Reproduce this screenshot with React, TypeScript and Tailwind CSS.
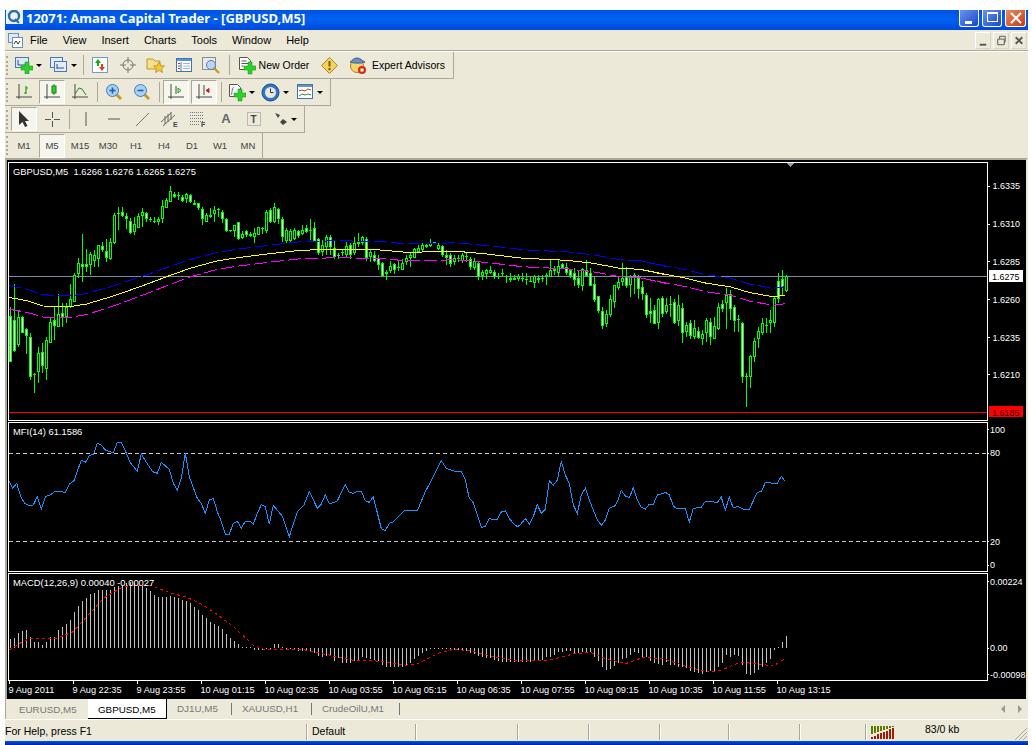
import React from "react";

// candles read off the chart: high, body top, body bottom, low, white body
type C = [number, number, number, number, number];

const SET_A: C[] = [
  [440,468,605,605,1],[372,480,572,575,1],[450,470,555,560,0],[468,472,520,520,1],[505,508,527,582,1],[520,532,650,660,1],[640,642,644,698,0],[562,578,636,668,0],[550,577,617,640,1],[530,541,627,660,0],
  [470,487,550,550,0],[440,480,497,540,1],[402,462,500,500,0],[430,460,472,500,1],[430,442,470,488,0],[372,418,440,445,0],[340,345,425,425,0],[295,310,342,355,0],[222,312,320,365,1],[268,312,320,335,1],
  [275,282,315,345,0],[270,286,302,320,0],[255,256,296,322,0],[245,258,270,275,1],[238,274,295,305,1],[235,246,298,300,0],[160,165,250,252,0],[142,160,162,210,0],[140,156,168,170,1],[160,168,178,208,1],
  [173,182,220,222,1],[170,192,216,225,0],[160,168,203,203,0],[145,156,168,200,0],[155,160,176,185,1],[172,176,178,185,0],[170,184,187,190,0],[170,178,186,195,0],[120,138,177,190,0],[115,120,144,144,0],
  [78,94,125,125,0],[95,103,112,115,1],[96,104,106,120,0],[105,112,122,125,1],[100,103,118,130,0],[103,105,125,130,1],[120,128,134,135,1],[128,130,144,150,1],[140,148,176,195,1],[160,165,185,187,0],
  [145,165,170,175,1],[138,150,162,185,0],[145,148,150,170,0],[150,156,178,188,1],[175,178,214,215,1],[210,211,214,215,1],[195,195,212,230,0],[185,187,238,240,1],[212,222,233,238,0],[210,214,224,232,1],
  [215,222,229,232,1],[205,220,231,248,0],[200,202,224,225,0],[200,203,205,222,0],[150,156,213,218,0],[145,150,187,190,1],[130,142,186,190,0],[145,148,177,192,1],[170,178,232,245,1],[205,211,242,250,0],
  [208,212,242,245,0],[205,211,238,240,0],[210,213,227,235,1],[195,210,221,225,0],[195,204,216,220,1],[178,209,211,240,0],[185,205,242,243,1],[235,238,278,285,1],[240,255,276,288,0],[225,230,260,285,0],
  [225,232,262,285,1],[240,265,292,296,1],[280,285,287,296,0],
];

const SET_B: C[] = [
  [210,216,219,228,0],[185,198,225,230,0],[190,196,226,238,1],[170,190,220,225,0],[160,186,192,200,1],[168,172,190,195,0],[172,178,233,243,1],[210,217,230,245,0],[213,226,243,245,1],[225,235,255,270,1],
  [245,250,288,290,1],[270,277,282,300,1],[243,259,273,280,0],[248,253,270,283,1],[240,262,264,272,0],[238,249,270,270,0],[225,235,247,255,0],[215,226,235,262,0],[205,208,234,235,0],[195,205,216,220,0],
  [190,195,211,216,0],[190,195,202,205,1],[178,190,197,200,0],[186,187,192,193,1],[190,196,207,210,0],[195,198,225,230,1],[210,226,235,255,1],[218,226,252,262,1],[225,235,247,255,0],[225,235,237,245,0],
  [218,226,243,248,0],[218,228,230,245,0],[230,236,262,270,1],[235,243,264,270,0],[243,250,291,300,1],[270,277,289,300,0],[268,270,283,297,0],[258,270,278,282,0],[270,277,291,297,1],[280,287,290,297,0],
  [267,280,281,292,0],[285,287,289,309,0],[279,294,299,305,1],[285,293,300,300,1],[283,288,298,302,0],[280,295,297,305,0],[280,297,299,316,0],[288,303,305,306,0],[285,288,309,323,0],[285,294,299,310,1],
  [285,295,296,305,0],[280,286,288,315,0],[240,270,290,290,0],[258,267,272,285,1],[240,258,279,290,0],[250,252,263,263,1],[248,260,278,285,1],[270,271,288,295,1],[265,280,300,318,1],[270,295,315,325,1],
  [265,268,318,333,0],[240,270,288,290,1],[265,280,317,318,1],[290,313,359,365,1],[348,349,392,400,1],[380,394,437,446,1],[390,401,431,440,0],[345,358,404,410,0],[315,316,365,383,0],[290,306,324,330,0],
  [250,294,305,318,0],[260,290,317,323,1],[285,288,315,350,0],[280,286,288,342,0],[285,295,326,358,1],[303,322,342,360,1],[340,346,404,413,1],[355,394,401,430,1],[375,391,431,431,1],[355,358,430,446,0],
  [348,354,401,410,1],[355,375,395,403,0],[348,373,375,412,0],[358,367,428,431,1],[345,376,423,437,0],
];

const SET_C: C[] = [
  [190,203,278,310,1],[245,255,275,290,0],[240,250,288,296,1],[240,265,290,298,0],[260,274,295,298,1],[270,283,296,315,0],[235,240,278,305,0],[235,247,292,315,1],[232,258,296,296,0],[190,202,267,270,0],
  [180,193,207,215,1],[145,166,188,268,0],[150,163,206,240,1],[195,202,242,275,1],[225,237,239,277,0],[247,248,412,430,1],[400,408,410,500,0],[345,347,410,445,0],[295,304,350,365,0],[260,274,296,325,0],
  [235,250,278,285,0],[235,254,256,280,0],[210,240,250,278,0],[170,175,248,260,0],[100,124,178,188,1],[90,118,142,165,1],[105,108,152,155,0],
];

const toY = (offset: number) => (c: C): C => [offset + c[0] / 3, offset + c[1] / 3, offset + c[2] / 3, offset + c[3] / 3, c[4]];
const CANDLES: C[] = [...SET_A.map(toY(160)), ...SET_B.map(toY(180)), ...SET_C.map(toY(240))];

const YELLOW: number[][] = [
  ...[[26,412],[80,422],[130,438],[210,440],[260,432],[340,408],[420,380],[500,350],[570,325],[650,303],[700,295],[800,282],[900,271],[1000,268]].map(([x, y]) => [x / 3, 160 + y / 3]),
  ...[[0,208],[120,210],[200,217],[350,214],[440,222],[550,235],[680,241],[760,250],[840,265],[900,268],[980,285]].map(([x, y]) => [340 + x / 3, 180 + y / 3]),
  ...[[0,88],[60,100],[130,113],[200,130],[270,140],[330,158],[400,170],[434,166]].map(([x, y]) => [640 + x / 3, 240 + y / 3]),
];

const envelope = (sign: number) =>
  YELLOW.map(([x, y]) => [x, y + sign * (x < 200 ? 12 - (x / 200) * 3.5 : 8.5)]);

const MFI: number[][] = [
  ...[[26,180],[38,205],[50,190],[62,230],[74,250],[90,258],[100,255],[112,230],[124,268],[136,230],[150,225],[166,214],[180,214],[196,218],[208,192],[222,182],[244,120],[258,127],[268,106],[280,104],[292,70],[304,75],[316,90],[340,98],[352,67],[364,68],[376,92],[390,127],[412,154],[424,102],[436,122],[458,155],[472,160],[484,127],[508,148],[520,190],[532,210],[544,175],[556,100],[568,170],[592,235],[604,250],[616,280],[628,240],[640,235],[652,275],[662,300],[676,342],[688,343],[700,310],[712,304],[724,325],[736,304],[750,304],[760,312],[772,280],[784,254],[796,260],[808,313],[820,256],[848,290],[868,350],[892,275],[912,255],[928,214],[952,265],[964,252],[976,224],[988,252],[1012,243],[1036,193],[1048,217],[1060,220],[1072,214],[1084,214],[1096,242],[1108,247],[1120,230],[1144,326],[1156,332],[1168,310],[1180,306],[1212,273],[1252,272],[1276,215],[1300,170],[1324,122],[1340,146],[1370,156],[1384,154],[1396,180],[1408,235],[1420,248],[1444,322],[1456,320],[1468,295],[1480,300],[1492,298],[1504,276],[1516,273],[1528,296],[1540,310],[1552,320]].map(([x, y]) => [x / 3, 420 + y / 3]),
  ...[[0,315],[16,296],[28,312],[40,290],[52,254],[64,280],[76,268],[88,182],[100,196],[112,180],[124,124],[136,165],[148,190],[160,255],[172,280],[184,225],[196,205],[208,240],[232,300],[244,316],[256,300],[268,265],[284,258],[292,245],[304,211],[316,228],[328,233],[340,203],[352,240],[364,262],[376,267],[388,253],[400,253],[412,225],[424,222],[436,217],[448,224],[460,258],[472,267],[496,266],[508,306],[520,265],[544,262],[556,244],[592,247],[604,232],[616,270],[628,232],[640,264],[652,259],[676,270],[688,268],[712,217],[724,215],[736,188],[772,190],[784,169],[794,182]].map(([x, y]) => [520 + x / 3, 420 + y / 3]),
];

// macd bars, in px above (+) or below (-) the zero line
const MACD_A = [210,207,193,185,183,205,218,218,228,218,205,203,183,173,165,152,130,110,97,87,75,72,64,62,64,62,55,50,47,42,40,43,47,52,57,67,78,84,84,84,81,84,88,94,97,103,113,123,137,148,160,165,170,181,195,208,215,225,234,235,235,243,243,243,238,238,225,225,234,236,238,243,247,246,245,245,252,260,263,262,260,275,268].map((t) => (237 - t) / 3);
const MACD_B = [68,68,68,62,60,52,55,58,60,64,75,80,82,82,82,80,75,68,58,48,38,33,28,27,27,24,24,33,30,30,30,33,38,42,48,52,55,55,60,63,65,65,65,67,67,67,67,67].map((b) => (24 - b) / 3);
const MACD_C = [722,722,720,712,710,705,697,695,693,693,698,698,697,697,695,710,722,742,749,747,738,730,718,713,705,697,700,710,712,722,730,732,735,727,735,735,740,742,745,752,755,760,762,755,752,752,740,728,705,710,705,708,735,762,765,760,750,740,730,718,690,680,666,648].map((b) => (684 - b) / 3);
const MACD = [...MACD_A, ...MACD_B, ...MACD_C];

const SIGNAL: number[][] = [
  ...[[28,240],[60,220],[90,205],[170,205],[220,185],[260,140],[310,85],[360,55],[400,45],[450,45],[500,65],[560,82],[600,100],[640,125],[700,170],[760,225],[790,237],[900,237],[1000,258]].map(([x, y]) => [x / 3, 570 + y / 3]),
  ...[[10,55],[50,63],[100,62],[130,65],[160,70],[190,76],[230,73],[260,58],[300,38],[340,28],[390,32],[430,42],[480,55]].map(([x, y]) => [340 + x / 3, 640 + y / 3]),
  ...[[0,722],[60,723],[100,718],[160,702],[210,697],[260,718],[320,730],[370,712],[430,716],[500,740],[560,755],[600,752],[660,727],[700,730],[760,738],[794,716]].map(([x, y]) => [520 + x / 3, 420 + y / 3]),
];

const pts = (list: number[][]) => list.map(([x, y]) => `${x.toFixed(1)},${y.toFixed(1)}`).join(" ");

const DATES = ["9 Aug 2011","9 Aug 22:35","9 Aug 23:55","10 Aug 01:15","10 Aug 02:35","10 Aug 03:55","10 Aug 05:15","10 Aug 06:35","10 Aug 07:55","10 Aug 09:15","10 Aug 10:35","10 Aug 11:55","10 Aug 13:15"];

function Caret() {
  return <span className="ml-[3px] h-0 w-0 border-x-[3px] border-t-[3px] border-x-transparent border-t-black" />;
}

function Plus() {
  return <path d="M10 6h4v4h4v4h-4v4h-4v-4H6v-4h4z" fill="#2ed02e" stroke="#0f8f0f" strokeWidth="0.5" />;
}

function Glass({ minus }: { minus?: boolean }) {
  return (
    <svg width="18" height="18" viewBox="0 0 18 18">
      <path d="M10 10l6 6" stroke="#c79a2b" strokeWidth="3" />
      <circle cx="7.5" cy="7.5" r="6" fill="#a9d0f0" stroke="#3a7fc0" />
      <path d={minus ? "M4.5 7.5h6" : "M4.5 7.5h6M7.5 4.5v6"} stroke="#1d5fa8" strokeWidth="1.6" />
    </svg>
  );
}

function Axes({ children }: { children: React.ReactNode }) {
  return (
    <svg width="18" height="18" viewBox="0 0 18 18" fill="none">
      <path d="M4 1v15M1 14h16" stroke="#4a4a3a" />
      {children}
    </svg>
  );
}

const ICONS: Record<string, React.ReactNode> = {
  newChart: (
    <svg width="18" height="18" viewBox="0 0 18 18">
      <rect x="0.5" y="1.5" width="13" height="10" fill="#dbe8f8" stroke="#4a78b8" />
      <path d="M3 4v5M3 9h7" stroke="#30507a" />
      <Plus />
    </svg>
  ),
  profiles: (
    <svg width="18" height="18" viewBox="0 0 18 18" fill="#e3edf9" stroke="#4a78b8">
      <rect x="0.5" y="1.5" width="12" height="10" />
      <rect x="4.5" y="5.5" width="12" height="10" />
      <path d="M7 8v5M7 12h7" stroke="#30507a" />
    </svg>
  ),
  market: (
    <svg width="17" height="17" viewBox="0 0 17 17">
      <rect x="0.5" y="0.5" width="15" height="15" fill="#fff" stroke="#6f9ccc" />
      <path d="M6 2L3 6h2v3h2V6h2z" fill="#18a818" />
      <path d="M10 14l3-4h-2V7H9v3H7z" fill="#e04020" />
    </svg>
  ),
  navigator: (
    <svg width="18" height="18" viewBox="0 0 18 18" fill="none" stroke="#777">
      <circle cx="9" cy="9" r="5" />
      <path d="M9 1v6M9 11v6M1 9h6M11 9h6" />
    </svg>
  ),
  favorites: (
    <svg width="20" height="18" viewBox="0 0 20 18">
      <path d="M1 3h6l2 2h5v8H1z" fill="#f6e08a" stroke="#b89a3a" />
      <path d="M13 6l1.7 3.6 3.8.4-2.8 2.6.8 3.9-3.5-2-3.5 2 .8-3.9L7.5 10l3.8-.4z" fill="#f5c92c" stroke="#a8841c" strokeWidth="0.7" />
    </svg>
  ),
  terminal: (
    <svg width="17" height="16" viewBox="0 0 17 16">
      <rect x="0.5" y="1.5" width="15" height="13" fill="#fff" stroke="#3f74b8" />
      <path d="M1 2h14v2H1z" fill="#5f93d0" />
      <path d="M5 5v9" stroke="#3f74b8" />
      <path d="M2 6.5h2M2 9h2M2 11.5h2" stroke="#c03030" />
      <path d="M7 6.5h7M7 9h7M7 11.5h7" stroke="#9bb7d8" />
    </svg>
  ),
  tester: (
    <svg width="20" height="19" viewBox="0 0 20 19">
      <rect x="0.5" y="1.5" width="13" height="12" fill="#e8e8ea" stroke="#8a8a96" />
      <path d="M11 11l6 6" stroke="#c79a2b" strokeWidth="2.4" />
      <circle cx="9" cy="9" r="4.5" fill="#bcd6f0" stroke="#5f7fa8" />
    </svg>
  ),
  order: (
    <svg width="18" height="19" viewBox="0 0 18 19">
      <path d="M1.5 1.5h8l3 3v9h-11z" fill="#fff" stroke="#555" />
      <path d="M3.5 5h5M3.5 7.5h7M3.5 10h2" stroke="#555" />
      <Plus />
    </svg>
  ),
  auto: (
    <svg width="17" height="17" viewBox="0 0 17 17">
      <path d="M8.5 0.5l8 8-8 8-8-8z" fill="#f5d25a" stroke="#a8842a" />
      <path d="M8.5 4v5.5" stroke="#7a5a16" strokeWidth="2" />
      <circle cx="8.5" cy="12" r="1.2" fill="#7a5a16" />
    </svg>
  ),
  expert: (
    <svg width="19" height="19" viewBox="0 0 19 19">
      <circle cx="8" cy="10" r="6.5" fill="#f4d56a" stroke="#a8842a" />
      <path d="M1 6c2-1 3-4 7-4s5 3 8 4c-3 1.5-12 1.5-15 0z" fill="#6d8fc0" stroke="#3d5f90" />
      <circle cx="13" cy="14" r="4" fill="#d42a12" />
      <rect x="11.5" y="12.5" width="3" height="3" fill="#fff" />
    </svg>
  ),
  bars: (
    <Axes>
      <path d="M11 3v8M9 10h2M11 5h2" stroke="#15a015" strokeWidth="1.2" />
    </Axes>
  ),
  candles: (
    <Axes>
      <path d="M11 1v11" stroke="#128012" />
      <rect x="9" y="3" width="4" height="7" fill="#2ed12e" stroke="#128012" />
    </Axes>
  ),
  line: (
    <Axes>
      <path d="M4 11l4-6 3 1 4 6" stroke="#1f8a1f" />
    </Axes>
  ),
  autoscroll: (
    <Axes>
      <path d="M9 3v8" stroke="#4a4a3a" />
      <path d="M11 5l3 2.5-3 2.5z" fill="#c8f0c8" stroke="#20a020" />
    </Axes>
  ),
  shift: (
    <Axes>
      <path d="M9 2v10" stroke="#4a4a3a" />
      <path d="M14 5.5l-3 2 3 2z" fill="#d02020" stroke="#d02020" />
    </Axes>
  ),
  indicators: (
    <svg width="18" height="19" viewBox="0 0 18 19">
      <path d="M1.5 1.5h8l3 3v9h-11z" fill="#fff" stroke="#555" />
      <text x="3" y="10" fontSize="8" fontStyle="italic" fill="#333" fontFamily="Liberation Serif, serif">f</text>
      <Plus />
    </svg>
  ),
  clock: (
    <svg width="19" height="19" viewBox="0 0 19 19">
      <circle cx="9.5" cy="9.5" r="8.5" fill="#2f76c8" stroke="#174a8c" />
      <circle cx="9.5" cy="9.5" r="5.5" fill="#e8e8e0" />
      <path d="M9.5 5.5v4h3" stroke="#333" fill="none" />
    </svg>
  ),
  templates: (
    <svg width="17" height="16" viewBox="0 0 17 16">
      <rect x="0.5" y="0.5" width="15" height="14" fill="#fff" stroke="#3f74b8" />
      <path d="M1 1h14v2H1z" fill="#5f93d0" />
      <path d="M2 7l3-1 3 1 3-2 3 1" stroke="#c04030" fill="none" />
      <path d="M2 12l3-2 3 1 3-1 3 1" stroke="#309030" fill="none" />
    </svg>
  ),
  cursor: (
    <svg width="14" height="18" viewBox="0 0 14 18">
      <path d="M2 1v14l3.5-3 2.5 5 2.5-1-2.5-5H12z" fill="#333" />
    </svg>
  ),
  cross: (
    <svg width="17" height="17" viewBox="0 0 17 17" stroke="#555">
      <path d="M8.5 1v6M8.5 10v6M1 8.5h6M10 8.5h6" />
    </svg>
  ),
  vline: (
    <svg width="4" height="16" viewBox="0 0 4 16" stroke="#555">
      <path d="M2 1v14" />
    </svg>
  ),
  hline: (
    <svg width="14" height="4" viewBox="0 0 14 4" stroke="#555">
      <path d="M1 2h12" />
    </svg>
  ),
  trend: (
    <svg width="15" height="15" viewBox="0 0 15 15" stroke="#777">
      <path d="M1 14L14 1" />
    </svg>
  ),
  channel: (
    <svg width="20" height="18" viewBox="0 0 20 18" fill="none" stroke="#666">
      <path d="M1 12l10-9M3 16l12-11M5 6v8M8 4v8M11 2v8" />
      <text x="13" y="17" fontSize="7" fontWeight="700" fill="#444" stroke="none" fontFamily="Liberation Sans, sans-serif">E</text>
    </svg>
  ),
  fibo: (
    <svg width="18" height="18" viewBox="0 0 18 18" fill="none" stroke="#777" strokeDasharray="1 1">
      <path d="M1 2.5h13M1 5.5h13M1 8.5h13M1 11.5h13M1 14.5h9" />
      <text x="12" y="17" fontSize="7" fontWeight="700" fill="#444" stroke="none" strokeDasharray="none" fontFamily="Liberation Sans, sans-serif">F</text>
    </svg>
  ),
  label: (
    <svg width="14" height="14" viewBox="0 0 14 14" fill="none" stroke="#888" strokeDasharray="1 1">
      <rect x="0.5" y="0.5" width="13" height="13" />
      <text x="3.5" y="11" fontSize="10" fontWeight="700" fill="#444" stroke="none" strokeDasharray="none" fontFamily="Liberation Sans, sans-serif">T</text>
    </svg>
  ),
  arrows: (
    <svg width="14" height="14" viewBox="0 0 14 14" fill="#444">
      <path d="M1 1l5 2-2 3zM9 7l4 3-4 3-3-3z" />
    </svg>
  ),
};

function Btn({ icon, pressed, w = "w-[28px]", drop, children }: { icon?: string; pressed?: boolean; w?: string; drop?: boolean; children?: React.ReactNode }) {
  return (
    <div className={`flex h-[25px] shrink-0 items-center justify-center ${w}`}>
      <div
        className={`flex h-[24px] w-full items-center justify-center ${pressed ? "mx-[1px] border border-b-white border-l-[#aca899] border-r-white border-t-[#aca899] bg-[#f6f5ee]" : ""}`}
      >
        {icon && ICONS[icon]}
        {drop && <Caret />}
        {children}
      </div>
    </div>
  );
}

function Sep() {
  return <div className="mx-[2.5px] h-[20px] w-[1px] shrink-0 bg-[#aca899]" />;
}

function Row({ w, last, children }: { w: string; last?: boolean; children: React.ReactNode }) {
  return (
    <div className={`flex items-center border-r border-[#aca899] ${last ? "h-[25px]" : "h-[27px] border-b"} ${w}`}>
      <div className="mr-[2px] ml-[1px] h-[19px] border-l-2 border-dotted border-[#aca899]" />
      {children}
    </div>
  );
}

function PriceChart() {
  return (
    <svg width="978" height="257" viewBox="9 163 978 257" className="block" shapeRendering="crispEdges">
      <path d="M786 163h8l-4 4z" fill="#8a97a8" />
      <line x1="9" x2="987" y1="276.5" y2="276.5" stroke="#7d8c9c" />
      <line x1="9" x2="987" y1="412.5" y2="412.5" stroke="#ff0000" />
      {CANDLES.map((c, i) => {
        const x = 10 + 4 * i;
        const top = Math.round(c[1]);
        const h = Math.max(1, Math.round(c[2]) - top);
        return (
          <g key={i}>
            <rect x={x} y={Math.round(c[0])} width="1" height={Math.max(1, Math.round(c[3]) - Math.round(c[0]))} fill="#00ff00" />
            <rect x={x - 1} y={top} width="3" height={h} fill="#00ff00" />
            {h > 2 && <rect x={x} y={top + 1} width="1" height={h - 2} fill={c[4] ? "#f0fff0" : "#000000"} />}
          </g>
        );
      })}
      <polyline points={pts(envelope(-1))} fill="none" stroke="#0000ff" strokeDasharray="13 4" />
      <polyline points={pts(envelope(1))} fill="none" stroke="#ff00ff" strokeDasharray="13 4" />
      <polyline points={pts(YELLOW)} fill="none" stroke="#ffff00" />
    </svg>
  );
}

function MfiChart() {
  return (
    <svg width="978" height="148" viewBox="9 423 978 148" className="block" shapeRendering="crispEdges">
      <g stroke="#c8c8c8" strokeDasharray="4 3">
        <line x1="9" x2="987" y1="453.5" y2="453.5" />
        <line x1="9" x2="987" y1="541.5" y2="541.5" />
      </g>
      <polyline points={pts(MFI)} fill="none" stroke="#1e90ff" />
    </svg>
  );
}

function MacdChart() {
  return (
    <svg width="978" height="106" viewBox="9 574 978 106" className="block" shapeRendering="crispEdges">
      <g fill="#c0c0c0">
        {MACD.map((v, i) => (
          <rect key={i} x={10 + 4 * i} y={v > 0 ? 648 - v : 648} width="1" height={Math.max(1, Math.abs(v))} />
        ))}
      </g>
      <polyline points={pts(SIGNAL)} fill="none" stroke="#ff0000" strokeDasharray="3 3" />
    </svg>
  );
}

function Pane({ h, title, chart, axis }: { h: string; title: string; chart: React.ReactNode; axis: React.ReactNode }) {
  return (
    <div className={`flex ${h}`}>
      <div className="relative w-[980px] shrink-0 border border-white">
        {chart}
        <span className="absolute top-[2.5px] left-[4px] text-[9.4px] leading-[12px] whitespace-pre text-white">{title}</span>
      </div>
      {axis}
    </div>
  );
}

function AxisLabels({ y0, h, items }: { y0: number; h: number; items: [string, number][] }) {
  return (
    <svg width="38" height={h} viewBox={`988 ${y0} 38 ${h}`} className="block shrink-0" fontFamily="Liberation Sans, sans-serif" fontSize="9">
      {items.map(([t, y]) => (
        <g key={t}>
          <rect x="988" y={Math.round(y)} width="1" height="1" fill="#fff" />
          <text x="990" y={y + 3.5} fill="#fff">{t}</text>
        </g>
      ))}
    </svg>
  );
}

function Chart() {
  return (
    <div className="flex h-[541px] shrink-0 flex-col border-t-2 border-r-2 border-l-2 border-[#aca899] border-r-[#ece9d8] bg-black pt-[2px] pl-[1px] font-['Liberation_Sans',sans-serif]">
      <Pane
        h="h-[259px]"
        title="GBPUSD,M5  1.6266 1.6276 1.6265 1.6275"
        chart={<PriceChart />}
        axis={
          <svg width="38" height="259" viewBox="988 162 38 259" className="block shrink-0" fontFamily="Liberation Sans, sans-serif" fontSize="9">
            {([["1.6335", 185.5], ["1.6310", 223.5], ["1.6285", 261], ["1.6260", 299], ["1.6235", 337], ["1.6210", 374]] as [string, number][]).map(([t, y]) => (
              <g key={t}>
                <rect x="988" y={Math.round(y)} width="2" height="1" fill="#fff" />
                <text x="992.5" y={y + 3.5} fill="#fff">{t}</text>
              </g>
            ))}
            <rect x="989" y="270" width="34" height="12" fill="#fff" />
            <text x="992" y="280" fill="#000">1.6275</text>
            <rect x="989" y="406" width="34" height="11" fill="#ff0000" />
            <text x="992" y="415.5" fill="#400000">1.6185</text>
          </svg>
        }
      />
      <div className="h-[1px]" />
      <Pane
        h="h-[150px]"
        title="MFI(14) 61.1586"
        chart={<MfiChart />}
        axis={<AxisLabels y0={422} h={150} items={[["100", 429], ["80", 452.5], ["20", 541], ["0", 564.5]]} />}
      />
      <div className="h-[1px]" />
      <Pane
        h="h-[108px]"
        title="MACD(12,26,9) 0.00040 -0.00027"
        chart={<MacdChart />}
        axis={<AxisLabels y0={573} h={108} items={[["0.00224", 581], ["0.00", 647.5], ["-0.00098", 674]]} />}
      />
      <svg width="1020" height="18" viewBox="8 681 1020 18" className="block shrink-0" fontFamily="Liberation Sans, sans-serif" fontSize="9.2" fill="#fff">
        {DATES.map((d, i) => (
          <g key={d}>
            <rect x={9 + 64 * i} y="681" width="1" height="3" />
            <text x={8.5 + 64 * i} y="692.5">{d}</text>
          </g>
        ))}
      </svg>
    </div>
  );
}

export default function App() {
  return (
    <div className="h-[745px] w-[1032px] overflow-hidden bg-white pt-[10px] pr-[4px] pl-[5px] font-['Liberation_Sans',sans-serif] text-[10.5px] text-black">
      <div className="flex h-[735px] flex-col bg-[#ece9d8]">
        {/* title bar */}
        <div className="flex h-[20px] shrink-0 items-start bg-linear-to-b from-[#0053e1] via-[#0061f2] to-[#0048d8]">
          <svg width="17" height="14" viewBox="0 0 17 14" className="mt-[0px] ml-[1px] shrink-0">
            <rect width="17" height="14" fill="#eaf2fb" />
            <circle cx="8" cy="6" r="5" fill="none" stroke="#2f6f9f" strokeWidth="2.4" />
            <path d="M9 9l4 4" stroke="#2f6f9f" strokeWidth="2" />
          </svg>
          <span className="ml-[3px] font-['Noto_Sans',sans-serif] text-[13px] leading-[16px] font-bold whitespace-pre text-white">
            12071: Amana Capital Trader - [GBPUSD,M5]
          </span>
          <div className="ml-auto flex gap-[3px] pr-[2px]">
            <div className="relative h-[17px] w-[20px] rounded-b-[3px] border border-t-0 border-white bg-linear-to-br from-[#6a93ee] to-[#1a45c8]">
              <div className="absolute bottom-[2px] left-[5px] h-[3px] w-[7px] bg-white" />
            </div>
            <div className="flex h-[17px] w-[20px] items-start justify-center rounded-b-[3px] border border-t-0 border-white bg-linear-to-br from-[#6a93ee] to-[#1a45c8]">
              <div className="mt-[2px] h-[10px] w-[11px] border border-t-2 border-white" />
            </div>
            <div className="flex h-[17px] w-[21px] items-center justify-center rounded-b-[3px] border border-t-0 border-white bg-linear-to-br from-[#e88a60] to-[#c8360e]">
              <svg width="12" height="12" viewBox="0 0 12 12" stroke="#fff" strokeWidth="2">
                <path d="M1 1l10 10M11 1L1 11" />
              </svg>
            </div>
          </div>
        </div>

        {/* menu */}
        <div className="flex h-[20px] shrink-0 items-center text-[11px]">
          <svg width="15" height="15" viewBox="0 0 15 15" className="ml-[3px] shrink-0">
            <rect x="0.5" y="0.5" width="10" height="9" fill="#dce8f6" stroke="#6a8fbc" />
            <rect x="4.5" y="4.5" width="10" height="10" fill="#fff" stroke="#6a8fbc" />
            <path d="M6 11l2-3 2 3 2-3" stroke="#333" fill="none" />
          </svg>
          <div className="ml-[7px] flex gap-[15px]">
            <span>File</span>
            <span>View</span>
            <span>Insert</span>
            <span>Charts</span>
            <span>Tools</span>
            <span>Window</span>
            <span>Help</span>
          </div>
          <div className="mr-[1px] ml-auto flex gap-[2px]">
            {["M4 12h7", "M4 6h7v6H4zM6 6V3h6v6h-1", "M4 4l7 7M11 4l-7 7"].map((d) => (
              <div key={d} className="flex h-[17px] w-[16px] items-center justify-center border border-b-[#d8d4c0] border-l-white border-r-[#d8d4c0] border-t-white">
                <svg width="15" height="15" viewBox="0 0 15 15" fill="none" stroke="#555" strokeWidth={d.length > 10 && d.length < 22 ? 2 : d.length < 8 ? 2 : 1}>
                  <path d={d} />
                </svg>
              </div>
            ))}
          </div>
        </div>
        <div className="h-[2px] shrink-0 border-t border-b border-t-[#aca899] border-b-white" />

        {/* toolbars */}
        <Row w="w-[449px]">
          <Btn icon="newChart" drop w="w-[36px]" />
          <Btn icon="profiles" drop w="w-[34px]" />
          <Sep />
          <Btn icon="market" />
          <Btn icon="navigator" />
          <Btn icon="favorites" />
          <Btn icon="terminal" />
          <Btn icon="tester" />
          <Sep />
          <Btn icon="order" w="w-[83px]">
            <span className="ml-[3px] pt-[1px]">New Order</span>
          </Btn>
          <Btn icon="auto" />
          <Btn icon="expert" w="w-[108px]">
            <span className="ml-[4px] pt-[1px]">Expert Advisors</span>
          </Btn>
        </Row>
        <Row w="w-[326px]">
          <Btn icon="bars" />
          <Btn icon="candles" pressed />
          <Btn icon="line" />
          <Sep />
          <Btn>
            <Glass />
          </Btn>
          <Btn>
            <Glass minus />
          </Btn>
          <Sep />
          <Btn icon="autoscroll" pressed />
          <Btn icon="shift" pressed />
          <Sep />
          <Btn icon="indicators" drop w="w-[34px]" />
          <Btn icon="clock" drop w="w-[34px]" />
          <Btn icon="templates" drop w="w-[36px]" />
        </Row>
        <Row w="w-[300px]">
          <Btn icon="cursor" pressed />
          <Btn icon="cross" />
          <Sep />
          <Btn icon="vline" />
          <Btn icon="hline" />
          <Btn icon="trend" />
          <Btn icon="channel" />
          <Btn icon="fibo" />
          <Btn>
            <span className="text-[13px] font-bold text-[#666]">A</span>
          </Btn>
          <Btn icon="label" />
          <Btn icon="arrows" drop w="w-[35px]" />
        </Row>
        <Row w="w-[258px]" last>
          {["M1", "M5", "M15", "M30", "H1", "H4", "D1", "W1", "MN"].map((t) => (
            <Btn key={t} pressed={t === "M5"}>
              <span className="pt-[2px] text-[9.5px] text-[#444]">{t}</span>
            </Btn>
          ))}
        </Row>

        <Chart />

        {/* tabs */}
        <div className="flex h-[21px] shrink-0 items-stretch border-b border-white text-[9.8px] text-[#777]">
          <div className="w-[83px] border-l border-[#aca899] pt-[4px] pl-[13px]">EURUSD,M5</div>
          <div className="w-[79px] border-r border-b border-black bg-white pt-[4px] pl-[10px] text-black">GBPUSD,M5</div>
          <div className="flex w-[65px] items-center pl-[10px]">
            <span className="grow">DJ1U,M5</span>
            <span className="h-[12px] w-[1px] bg-[#777]" />
          </div>
          <div className="flex w-[80px] items-center pl-[10px]">
            <span className="grow">XAUUSD,H1</span>
            <span className="h-[12px] w-[1px] bg-[#777]" />
          </div>
          <div className="flex w-[88px] items-center pl-[10px]">
            <span className="grow">CrudeOilU,M1</span>
            <span className="h-[12px] w-[1px] bg-[#777]" />
          </div>
          <div className="mr-[6px] ml-auto flex items-center gap-[13px]">
            <span className="h-0 w-0 border-y-[4px] border-r-[4px] border-y-transparent border-r-[#999]" />
            <span className="h-0 w-0 border-y-[4px] border-l-[4px] border-y-transparent border-l-[#999]" />
          </div>
        </div>

        {/* status bar */}
        <div className="relative flex h-[21px] shrink-0 items-end pb-[1px]">
          {[["w-[302px]", "For Help, press F1"], ["w-[109px]", "Default"], ["w-[102px]", ""], ["w-[71px]", ""], ["w-[71px]", ""], ["w-[69px]", ""], ["w-[71px]", ""], ["w-[66px]", ""]].map(([w, t], i) => (
            <div key={i} className={`flex h-[16px] shrink-0 items-center border-r border-[#aca899] shadow-[1px_0_0_#fff] ${i === 1 ? "pl-[5px]" : ""} ${w}`}>
              {t}
            </div>
          ))}
          <svg width="24" height="13" viewBox="0 0 24 13" className="mb-[1px] ml-[5px] shrink-0" shapeRendering="crispEdges">
            {[0, 1, 2, 3, 4, 5, 6, 7].map((i) => (
              <g key={i}>
                <rect x={i * 3} y="0" width="2" height={8 - i} fill="#5f7a00" />
                <rect x={i * 3} y={11 - i * 1.3} width="2" height={2 + i * 1.3} fill="#a01c08" />
              </g>
            ))}
          </svg>
          <span className="mb-[2px] ml-[30px]">83/0 kb</span>
          <svg width="15" height="15" viewBox="0 0 15 15" className="absolute right-0 bottom-0" stroke="#aca899">
            <path d="M14 2L2 14M14 6L6 14M14 10l-4 4" />
          </svg>
        </div>

        {/* window bottom border */}
        <div className="h-[4px] shrink-0 bg-linear-to-b from-[#0053e1] to-[#00249c]" />
      </div>
    </div>
  );
}
